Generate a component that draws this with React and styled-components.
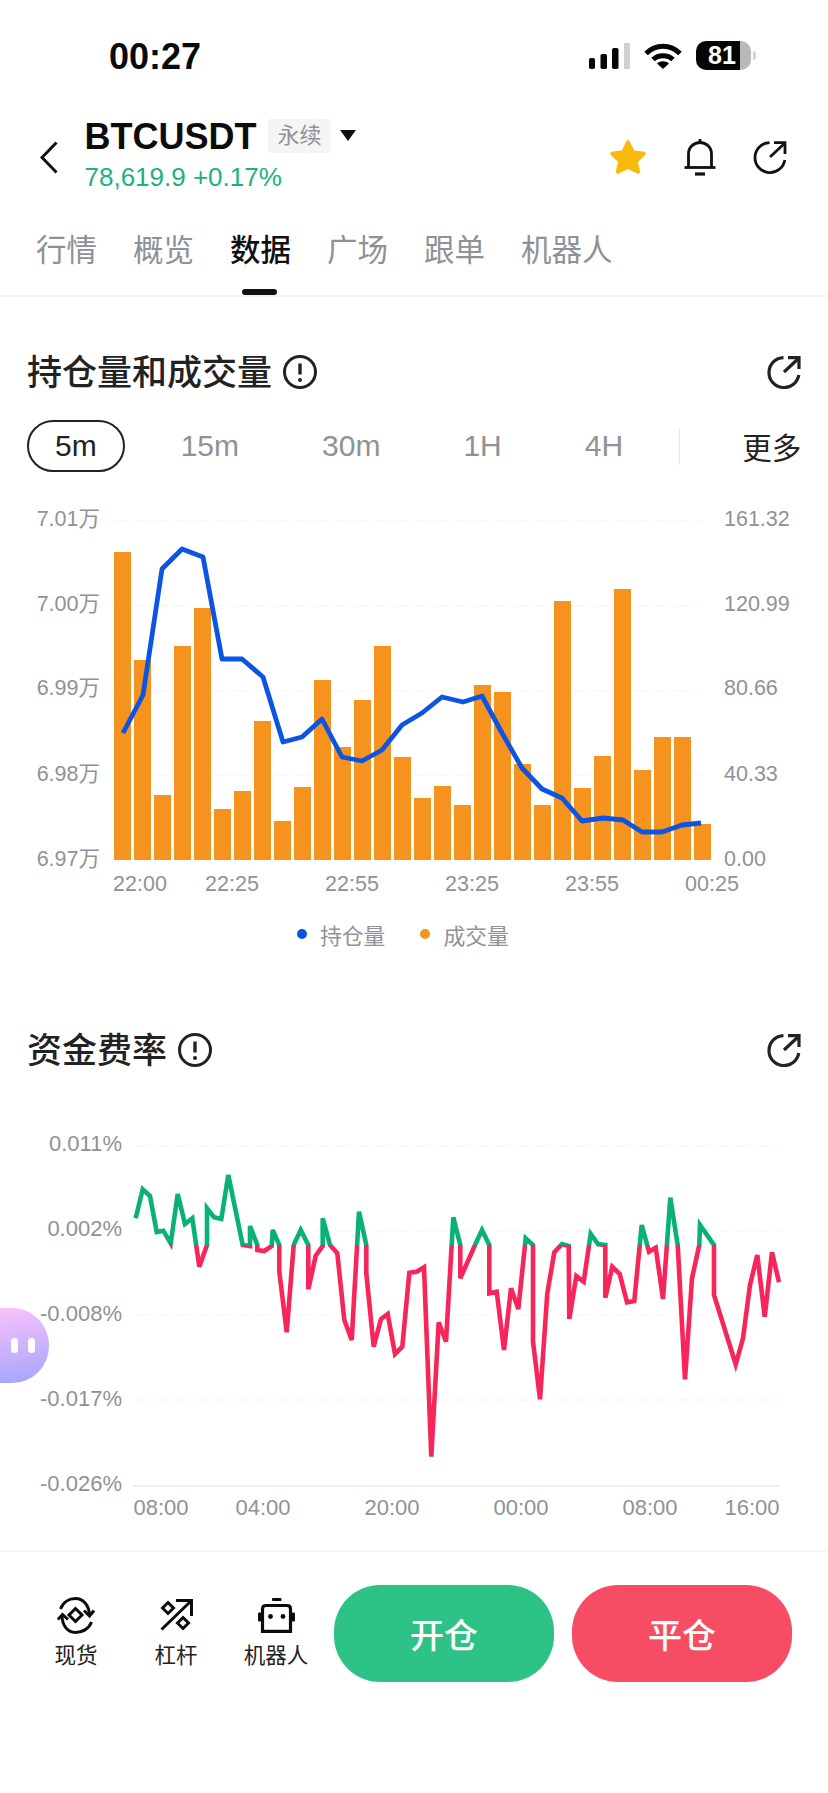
import React from "react";
import styled, { createGlobalStyle } from "styled-components";

const FONT = `"Liberation Sans", "Noto Sans CJK SC", sans-serif`;

const Global = createGlobalStyle`
  html, body { margin: 0; padding: 0; background: #fff; }
  body { font-family: ${FONT}; }
  * { box-sizing: border-box; }
`;

const Page = styled.div`
  position: relative; width: 828px; height: 1793px; overflow: hidden; background: #fff; color: #222;
`;
const StatusBar = styled.div`
  display: flex; align-items: center; justify-content: space-between;
  height: 114px; padding: 0 77px 0 109px;
`;
const Clock = styled.div`font-size: 36px; font-weight: 700; color: #0a0a0a;`;
const StatusIcons = styled.div`display: flex; align-items: center; gap: 14px; margin-top: -3px;`;
const Battery = styled.div`
  position: relative; width: 55px; height: 29px; border-radius: 10px;
  background: linear-gradient(to right, #050505 80%, #b9b9b9 80%);
  color: #fff; font-size: 25px; font-weight: 700; line-height: 29px; padding-left: 12px;
  &::after {
    content: ""; position: absolute; right: -5px; top: 10px; width: 3px; height: 9px;
    background: #d4d4d4; border-radius: 0 3px 3px 0;
  }
`;
const Nav = styled.div`display: flex; align-items: center; height: 84px; padding: 0 41px 0 40px;`;
const BackSlot = styled.div`display: flex; width: 44.5px; margin-top: 2px;`;
const TitleCol = styled.div`flex: 1;`;
const TitleRow = styled.div`display: flex; align-items: center; height: 42px;`;
const Symbol = styled.div`font-size: 36px; font-weight: 700; color: #0c0c0c; padding-top: 2px;`;
const Tag = styled.div`
  margin-left: 12px; width: 62px; height: 34px; background: #f5f5f5; border-radius: 3px;
  color: #8f9296; font-size: 22px; line-height: 34px; text-align: center;
`;
const Caret = styled.div`
  margin-left: 10px; width: 0; height: 0; border-left: 8px solid transparent; border-right: 8px solid transparent;
  border-top: 11px solid #111;
`;
const Price = styled.div`font-size: 26px; line-height: 42px; color: #1ab27d; margin-top: -1px;`;
const NavIcons = styled.div`display: flex; align-items: center; gap: 37px; margin-top: 2px;`;
const Tabs = styled.div`
  display: flex; gap: 36px; padding: 34px 36px 27px; border-bottom: 2px solid #f5f5f5; height: 99px;
`;
const Tab = styled.div`
  position: relative; font-size: 30.5px; line-height: 36px; font-weight: ${p => (p.$active ? 500 : 400)};
  color: ${p => (p.$active ? "#111" : "#8e9195")};
  ${p => p.$active && `&::after {
    content: ""; position: absolute; left: 12px; bottom: -27px; width: 35px; height: 6px;
    background: #111; border-radius: 3px;
  }`}
`;
const SectionHead = styled.div`
  display: flex; align-items: center; justify-content: space-between;
  height: 40px; padding: 0 27px 0 27px; margin-top: ${p => p.$top}px;
`;
const TitleGroup = styled.div`display: flex; align-items: center; gap: 11px;`;
const SectionTitle = styled.div`font-size: 35px; font-weight: 500; color: #222; line-height: 40px; padding-top: 2px;`;
const Periods = styled.div`display: flex; align-items: center; gap: 29px; padding-left: 27px; margin-top: 28px; height: 52px;`;
const Period = styled.div`
  height: 52px; line-height: 48px; padding: 0 ${p => (p.$active ? 26 : 25)}px; border-radius: 26px; font-size: 30px;
  border: 2px solid ${p => (p.$active ? "#222" : "transparent")};
  color: ${p => (p.$active ? "#222" : "#8f9296")};
`;
const PeriodDivider = styled.div`width: 1px; height: 37px; background: #e6e6e6; margin-left: 0;`;
const More = styled.div`margin-left: 33px; font-size: 29.5px; color: #222;`;
const ChartSvg = styled.svg`
  display: block; width: 828px;
  text { font-family: ${FONT}; font-size: ${p => p.$font}px; fill: #8f9296; }
`;
const Legend = styled.div`display: flex; height: 40px; margin-top: 14px; padding-left: 297px; align-items: center;`;
const LegendItem = styled.div`
  display: flex; align-items: center; gap: 13px; font-size: 21.8px; color: #8f9296; margin-right: 35px;
`;
const Dot = styled.span`width: 10px; height: 10px; border-radius: 50%; background: ${p => p.$color};`;
const BottomBar = styled.div`
  display: flex; align-items: center; margin-top: 20px; padding: 33px 0 0 26px; border-top: 2px solid #f6f6f6;
`;
const Shortcut = styled.div`
  display: flex; flex-direction: column; align-items: center; width: 100px; font-size: 21.5px; color: #222; line-height: 30px; gap: 7px;
`;
const IconSlot = styled.div`display: flex; align-items: center; justify-content: center; height: 38px;`;
const TradeButton = styled.div`
  width: 220px; height: 97px; border-radius: 46px; background: ${p => p.$bg}; color: #fff;
  display: flex; align-items: center; justify-content: center; font-size: 34px; font-weight: 500;
  margin-left: ${p => p.$left}px;
`;
const Assistant = styled.div`
  position: absolute; left: 0; top: 1308px; width: 49px; height: 75px; border-radius: 0 37px 37px 0;
  background: linear-gradient(170deg, #f9c1fb, #a2a5fb);
  display: flex; align-items: center; gap: 10px; padding-left: 11px;
`;
const Eye = styled.span`width: 7px; height: 15px; border-radius: 4px; background: #fff;`;

const Signal = () => (
  <svg width="41" height="26" viewBox="0 0 41 26">
    <rect x="0" y="15" width="6" height="11" rx="1.8" fill="#050505" />
    <rect x="11.5" y="11" width="6.5" height="15" rx="1.8" fill="#050505" />
    <rect x="23" y="5" width="6.5" height="21" rx="1.8" fill="#050505" />
    <rect x="35" y="0" width="6" height="26" rx="1.2" fill="#d0d0d0" />
  </svg>
);
const Wifi = () => (
  <svg width="38" height="26" viewBox="0 0 38 26" fill="none" stroke="#050505" strokeWidth="5">
    <path d="M2 10.5 C11.5 0.8 26.5 0.8 36 10.5" />
    <path d="M9 16.5 C14.5 11.5 23.5 11.5 29 16.5" />
    <path d="M19 26 L13 20.5 C16 17.6 22 17.6 25 20.5 Z" fill="#050505" stroke="none" />
  </svg>
);
const Chevron = () => (
  <svg width="18" height="33" viewBox="0 0 18 33" fill="none" stroke="#111" strokeWidth="3">
    <path d="M16.5 1.5 L2 16.5 L16.5 31.5" />
  </svg>
);
const Star = () => (
  <svg width="38" height="36" viewBox="0 0 38 36">
    <path d="M19 3 L24 13 L35 14.5 L27 22.5 L29.5 33 L19 28 L8.5 33 L11 22.5 L3 14.5 L14 13 Z"
      fill="#f9b90d" stroke="#f9b90d" strokeWidth="3.6" strokeLinejoin="round" />
  </svg>
);
const Bell = () => (
  <svg width="32" height="38" viewBox="0 0 32 38" fill="none" stroke="#111" strokeWidth="2.8">
    <path d="M16 1 V4.5" />
    <path d="M4.5 29 V16 C4.5 9 10 4.5 16 4.5 C22 4.5 27.5 9 27.5 16 V29" />
    <path d="M0.5 29.5 H31.5" />
    <path d="M11 36 H21" strokeWidth="3.2" />
  </svg>
);
const ShareOut = ({ size = 34, sw = 3.2, color = "#222" }) => (
  <svg width={size} height={size} viewBox="0 0 34 34" fill="none" stroke={color} strokeWidth={sw}>
    <path d="M16.5 2.6 A15 15 0 1 0 31.8 20" />
    <path d="M17 17 L32 3" />
    <path d="M21 2.6 H32 V14" />
  </svg>
);
const Info = () => (
  <svg width="34" height="34" viewBox="0 0 34 34" fill="none" stroke="#222" strokeWidth="3">
    <circle cx="17" cy="17" r="15.5" />
    <path d="M17 8.5 V19.5" strokeWidth="3.4" />
    <circle cx="17" cy="25" r="2" fill="#222" stroke="none" />
  </svg>
);
const SpotIcon = () => (
  <svg width="38" height="37" viewBox="0 0 38 37" fill="none" stroke="#0c0c0c" strokeWidth="3">
    <path d="M3.5 12 C6 5 12 1.5 18.5 1.5 C26 1.5 32 8 32.5 18" />
    <path d="M27 13.5 L32.5 19 L37 13.5" />
    <path d="M34.5 25 C32 32 25 35.5 18.5 35.5 C11 35.5 5 29 5 18" />
    <path d="M0.8 22.5 L5.5 17.5 L11 22.5" />
    <path d="M18.5 11.5 L25 18 L18.5 24.5 L12 18 Z" />
  </svg>
);
const LeverIcon = () => (
  <svg width="33" height="32" viewBox="0 0 33 32" fill="none" stroke="#0c0c0c" strokeWidth="3">
    <path d="M1.5 30.5 L31 2" />
    <path d="M16 1.6 H31.5 V17" />
    <path d="M8 3.5 L13.5 9 L8 14.5 L2.5 9 Z" />
    <path d="M23 18.5 L28.5 24 L23 29.5 L17.5 24 Z" />
  </svg>
);
const RobotIcon = () => (
  <svg width="37" height="35" viewBox="0 0 37 35">
    <rect x="14" y="0" width="9.5" height="3" rx="1" fill="#0c0c0c" />
    <path d="M8 7.5 H29 Q32.5 7.5 32.5 11 V33.3 H4.5 V11 Q4.5 7.5 8 7.5 Z" fill="none" stroke="#0c0c0c" strokeWidth="3.2" />
    <rect x="0" y="14.5" width="3.2" height="9" rx="1" fill="#0c0c0c" />
    <rect x="33.8" y="14.5" width="3.2" height="9" rx="1" fill="#0c0c0c" />
    <circle cx="12.5" cy="18.5" r="2.4" fill="#0c0c0c" />
    <circle cx="25" cy="18.5" r="2.4" fill="#0c0c0c" />
  </svg>
);

const barTops = [552, 660, 795, 646, 608, 809, 791, 721, 821, 787, 680, 747, 700, 646, 757, 798, 786, 805, 685, 692, 764, 805, 601, 788, 756, 589, 770, 737, 737, 824];
const blueLine = [[123,733],[143,695],[162,569],[182,549],[203,557],[222,659],[242,659],[263,677],[283,742],[302,737],[322,719],[342,757],[362,761],[382,750],[402,725],[422,713],[442,697],[463,702],[482,696],[502,733],[522,768],[542,789],[562,798],[582,821],[603,818],[623,820],[642,832],[662,832],[682,825],[701,823]];
const leftAxis = [["7.01万",519],["7.00万",604],["6.99万",688],["6.98万",774],["6.97万",859]];
const rightAxis = [["161.32",519],["120.99",604],["80.66",688],["40.33",774],["0.00",859]];
const volTimes = [["22:00",140],["22:25",232],["22:55",352],["23:25",472],["23:55",592],["00:25",712]];

const zoomA = [[407,295],[428,208],[450,228],[470,336],[490,332],[512,370],[533,222],[555,312],[577,295],[598,440],[621,375],[621,265],[642,292],[664,297],[685,165],[728,375],[750,378],[750,318],[772,375],[772,390],[793,393],[815,378],[818,330],[838,375],[838,455],[860,637],[881,375]];
const zoomB = [[62,330],[85,375],[85,508],[107,407],[128,378],[128,295],[150,375],[172,400],[193,600],[215,660],[237,275],[259,375],[259,460],[281,680],[303,597],[323,582],[345,702],[367,680],[388,458],[410,455],[432,442],[454,1010],[476,607],[498,665],[520,292],[541,375],[541,475],[585,375],[606,330],[628,375],[628,520],[650,515],[672,690],[693,505],[715,567],[737,355],[759,375],[759,665],[780,838],[802,520]];
const zoomC = [[19,397],[42,372],[62,378],[64,597],[85,468],[107,485],[128,342],[150,372],[172,375],[172,533],[193,440],[215,462],[237,547],[259,543],[281,315],[303,395],[323,383],[345,537],[367,233],[389,375],[411,778],[432,475],[454,375],[456,315],[498,375],[498,525],[563,733],[585,655],[606,495],[628,405],[650,590],[672,397],[693,487]];
const fundingPts = [
  ...zoomA.map(([x, y]) => [x / 3, 1120 + y / 3]),
  ...zoomB.map(([x, y]) => [280 + x / 3, 1120 + y / 3]),
  ...zoomC.map(([x, y]) => [548 + x / 3, 1120 + y / 3]),
].map(([x, y]) => `${x.toFixed(1)},${y.toFixed(1)}`).join(" ");
const fundAxis = [["0.011%",1144],["0.002%",1229],["-0.008%",1314],["-0.017%",1399],["-0.026%",1484]];
const fundTimes = [["08:00",161],["04:00",263],["20:00",392],["00:00",521],["08:00",650],["16:00",752]];

const ZERO_Y = 1245;

export default function App() {
  return (
    <Page>
      <Global />
      <StatusBar>
        <Clock>00:27</Clock>
        <StatusIcons>
          <Signal />
          <Wifi />
          <Battery>81</Battery>
        </StatusIcons>
      </StatusBar>
      <Nav>
        <BackSlot><Chevron /></BackSlot>
        <TitleCol>
          <TitleRow>
            <Symbol>BTCUSDT</Symbol>
            <Tag>永续</Tag>
            <Caret />
          </TitleRow>
          <Price>78,619.9 +0.17%</Price>
        </TitleCol>
        <NavIcons>
          <Star />
          <Bell />
          <ShareOut color="#111" sw={2.8} />
        </NavIcons>
      </Nav>
      <Tabs>
        <Tab>行情</Tab>
        <Tab>概览</Tab>
        <Tab $active>数据</Tab>
        <Tab>广场</Tab>
        <Tab>跟单</Tab>
        <Tab>机器人</Tab>
      </Tabs>

      <SectionHead $top={55}>
        <TitleGroup>
          <SectionTitle>持仓量和成交量</SectionTitle>
          <Info />
        </TitleGroup>
        <ShareOut />
      </SectionHead>
      <Periods>
        <Period $active>5m</Period>
        <Period>15m</Period>
        <Period>30m</Period>
        <Period>1H</Period>
        <Period>4H</Period>
        <PeriodDivider />
        <More>更多</More>
      </Periods>

      <ChartSvg $font={21.5} height="428" viewBox="0 472 828 428">
        {[521, 606, 691, 775].map(y => (
          <line key={y} x1="114" x2="700" y1={y} y2={y} stroke="#f7f7f7" strokeWidth="1.5" strokeDasharray="14 6" />
        ))}
        {barTops.map((top, i) => (
          <rect key={i} x={114 + 20 * i} y={top} width="17" height={860 - top} fill="#f6931e" />
        ))}
        <polyline points={blueLine.map(p => p.join(",")).join(" ")} fill="none" stroke="#0c55e4" strokeWidth="4.8" strokeLinejoin="round" />
        {leftAxis.map(([t, y]) => <text key={t} x="100" y={y + 7} textAnchor="end">{t}</text>)}
        {rightAxis.map(([t, y]) => <text key={t} x="724" y={y + 7}>{t}</text>)}
        {volTimes.map(([t, x]) => <text key={t} x={x} y="891" textAnchor="middle">{t}</text>)}
      </ChartSvg>
      <Legend>
        <LegendItem><Dot $color="#0c55e4" />持仓量</LegendItem>
        <LegendItem><Dot $color="#f6931e" />成交量</LegendItem>
      </Legend>

      <SectionHead $top={76}>
        <TitleGroup>
          <SectionTitle>资金费率</SectionTitle>
          <Info />
        </TitleGroup>
        <ShareOut />
      </SectionHead>

      <ChartSvg $font={22} height="460" viewBox="0 1070 828 460">
        <defs>
          <clipPath id="above"><rect x="0" y="1070" width="828" height={ZERO_Y - 1070} /></clipPath>
          <clipPath id="below"><rect x="0" y={ZERO_Y} width="828" height={1530 - ZERO_Y} /></clipPath>
        </defs>
        {[1146, 1231, 1315, 1400].map(y => (
          <line key={y} x1="136" x2="780" y1={y} y2={y} stroke="#f7f7f7" strokeWidth="1.5" strokeDasharray="14 6" />
        ))}
        <line x1="133" x2="780" y1="1486" y2="1486" stroke="#efefef" strokeWidth="2" />
        <polyline clipPath="url(#above)" points={fundingPts} fill="none" stroke="#0ab177" strokeWidth="4.6" />
        <polyline clipPath="url(#below)" points={fundingPts} fill="none" stroke="#f6265b" strokeWidth="4.6" />
        {fundAxis.map(([t, y]) => <text key={t} x="122" y={y + 7} textAnchor="end">{t}</text>)}
        {fundTimes.map(([t, x], i) => <text key={i} x={x} y="1515" textAnchor="middle">{t}</text>)}
      </ChartSvg>

      <BottomBar>
        <Shortcut><IconSlot><SpotIcon /></IconSlot>现货</Shortcut>
        <Shortcut><IconSlot><LeverIcon /></IconSlot>杠杆</Shortcut>
        <Shortcut><IconSlot><RobotIcon /></IconSlot>机器人</Shortcut>
        <TradeButton $bg="#2dc386" $left={8}>开仓</TradeButton>
        <TradeButton $bg="#f74d64" $left={18}>平仓</TradeButton>
      </BottomBar>

      <Assistant><Eye /><Eye /></Assistant>
    </Page>
  );
}
